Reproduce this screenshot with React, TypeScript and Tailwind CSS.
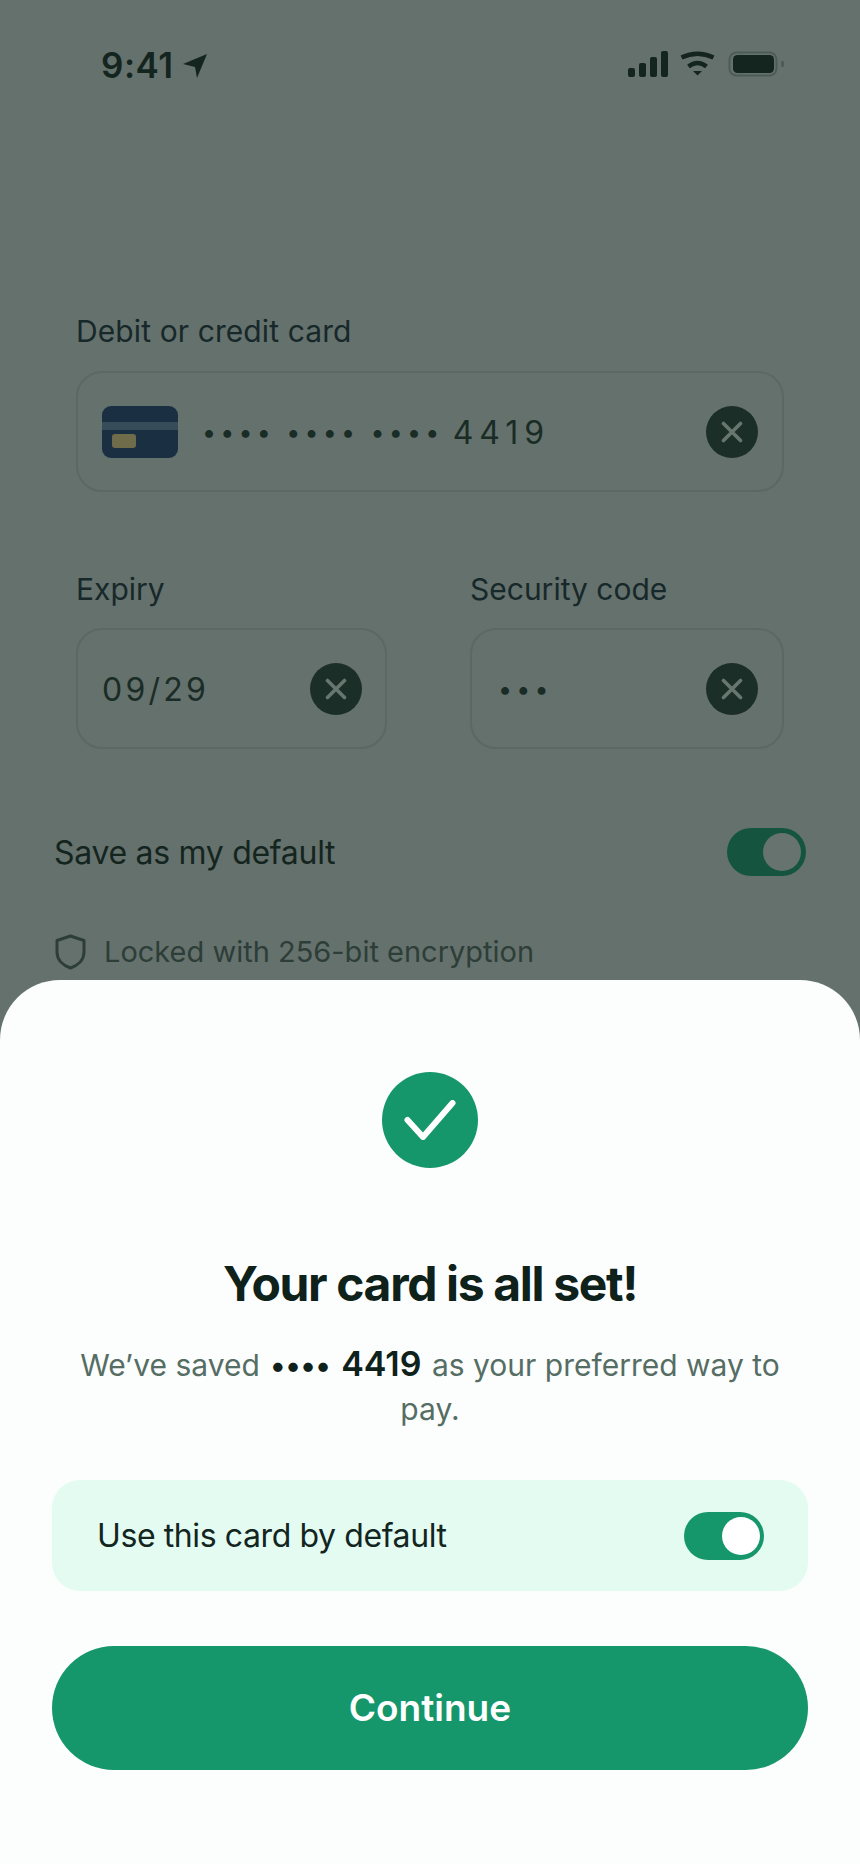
import React from "react";

function ClearButton() {
  return (
    <div className="flex h-[52px] w-[52px] shrink-0 items-center justify-center rounded-full bg-[#1b2e28]">
      <svg width="22" height="22" viewBox="0 0 22 22" fill="none">
        <path d="M2.5 2.5 L19.5 19.5 M19.5 2.5 L2.5 19.5" stroke="#67766f" strokeWidth="3.6" strokeLinecap="round" />
      </svg>
    </div>
  );
}

function Field({ children }: { children: React.ReactNode }) {
  return (
    <div className="flex h-[121px] items-center rounded-[26px] border-2 border-[#5a6962] pl-6 pr-6">
      {children}
    </div>
  );
}

function Dots({ children }: { children: React.ReactNode }) {
  return <span className="text-[25px] tracking-[4.2px]">{children}</span>;
}

function StatusBar() {
  return (
    <div className="flex h-[66px] items-center justify-between pl-[101px] pr-[75px]">
      <div className="flex items-center gap-[8px]">
        <span className="text-[35px] font-semibold leading-none tracking-[0.5px] text-[#14251f]">9:41</span>
        <svg width="26" height="26" viewBox="0 0 26 26" className="mt-[1px]">
          <path d="M1 11 L25 1 L15 25 L13 14 Z" fill="#14251f" />
        </svg>
      </div>
      <svg width="157" height="28" viewBox="0 0 157 28" className="-mt-[1px]">
        <g fill="#14251f">
          <rect x="0" y="17" width="7" height="9" rx="2" />
          <rect x="11" y="12" width="7" height="14" rx="2" />
          <rect x="22" y="6" width="7" height="20" rx="2" />
          <rect x="33" y="0" width="7" height="26" rx="2" />
          <path d="M65 20 L74 20 L69.5 24.5 Z" />
        </g>
        <g fill="none" stroke="#14251f" strokeWidth="4.5">
          <path d="M53.5 6.5 Q69.5 -1 85.5 6.5" />
          <path d="M60.5 15.5 Q69.5 8.5 78.5 15.5" />
        </g>
        <rect x="101.5" y="1.5" width="47" height="23" rx="7" fill="none" stroke="#4d5c56" strokeWidth="2" />
        <rect x="105" y="4" width="41" height="18" rx="4.5" fill="#14251f" />
        <rect x="153" y="10" width="3" height="6" rx="1" fill="#4d5c56" />
      </svg>
    </div>
  );
}

function CardIcon() {
  return (
    <div className="h-[52px] w-[76px] shrink-0 overflow-hidden rounded-[9px] bg-[#1a2f41]">
      <div className="mt-4 h-2 bg-[#374c59]" />
      <div className="ml-[10px] mt-1 h-[14px] w-6 rounded-[3px] bg-[#6f6c4c]" />
    </div>
  );
}

export default function App() {
  return (
    <div
      className="flex h-[1864px] w-[860px] flex-col overflow-hidden bg-[#65716c] text-[#18291f]"
      style={{ fontFamily: '"Inter", "Liberation Sans", sans-serif' }}
    >
      <div className="pt-[32px]">
        <StatusBar />
      </div>

      <div className="px-[76px] pt-[213px]">
        <div className="text-[30px] leading-[40px] tracking-[0.1px] text-[#17282a]">Debit or credit card</div>
        <div className="mt-[20px]">
          <Field>
            <CardIcon />
            <div className="ml-[24px] mt-[2px] flex flex-1 items-center gap-[9px] text-[32px] leading-none tracking-[6px] text-[#1a2c26]">
              <Dots>•••• •••• ••••</Dots>
              <span>4419</span>
            </div>
            <ClearButton />
          </Field>
        </div>

        <div className="mt-[77px] grid grid-cols-[311px_314px] gap-x-[83px]">
          <div>
            <div className="text-[30px] leading-[40px] text-[#17282a]">Expiry</div>
            <div className="mt-[19px]">
              <Field>
                <div className="mt-[2px] flex-1 text-[32px] leading-none tracking-[0.1em] text-[#1a2c26]">09/29</div>
                <div className="-mr-px">
                  <ClearButton />
                </div>
              </Field>
            </div>
          </div>
          <div>
            <div className="text-[30px] leading-[40px] text-[#17282a]">Security code</div>
            <div className="mt-[19px]">
              <Field>
                <div className="ml-[2px] mt-[2px] flex-1 leading-none text-[#1a2c26]">
                  <Dots>•••</Dots>
                </div>
                <ClearButton />
              </Field>
            </div>
          </div>
        </div>
      </div>

      <div className="flex items-center justify-between pl-[54px] pr-[54px] pt-[80px]">
        <div className="text-[32px] leading-[40px] tracking-[-0.3px] text-[#14251f]">Save as my default</div>
        <div className="-mt-px flex h-[48px] w-[79px] items-center justify-end rounded-full bg-[#15543f] pr-[5px]">
          <div className="h-[38px] w-[38px] rounded-full bg-[#67736e]" />
        </div>
      </div>

      <div className="flex items-center gap-[18px] pl-[55px] pt-[58px]">
        <svg width="31" height="36" viewBox="0 0 31 36" fill="none">
          <path
            d="M15.5 2 L29 6.5 V18 C29 26 23 31.5 15.5 34 C8 31.5 2 26 2 18 V6.5 Z"
            stroke="#2d3e38"
            strokeWidth="3"
            strokeLinejoin="round"
          />
        </svg>
        <div className="text-[29px] leading-[36px] text-[#2d3e38]">Locked with 256-bit encryption</div>
      </div>

      <div className="mt-auto flex h-[884px] flex-col items-center rounded-t-[60px] bg-[#fbfefd] px-[52px] pt-[92px]">
        <div className="flex h-[96px] w-[96px] items-center justify-center rounded-full bg-[#15976b]">
          <svg width="52" height="40" viewBox="0 0 52 40" fill="none">
            <path d="M3.5 20 L19 37 L48.5 3" stroke="#ffffff" strokeWidth="6" strokeLinecap="round" strokeLinejoin="round" />
          </svg>
        </div>
        <h1 className="mt-[88px] text-[48px] font-bold leading-[56px] tracking-[-0.028em] text-[#0e211b]">
          Your card is all set!
        </h1>
        <p className="mt-[31px] w-[720px] text-center text-[30px] leading-[44px] text-[#566d64]">
          We’ve saved <span className="ml-[2px] font-semibold text-[#0e211b]">••••</span>{" "}
          <span className="mx-[2px] text-[34px] font-semibold leading-[34px] text-[#0e211b]">4419</span> as your
          preferred way to pay.
        </p>
        <div className="mt-[49px] flex h-[111px] w-full items-center justify-between rounded-[28px] bg-[#e4fbf2] pl-[45px] pr-[44px]">
          <div className="text-[32px] leading-[40px] tracking-[-0.4px] text-[#12251f]">Use this card by default</div>
          <div className="flex h-[48px] w-[80px] items-center justify-end rounded-full bg-[#15976b] pr-[4px]">
            <div className="h-[38px] w-[38px] rounded-full bg-white" />
          </div>
        </div>
        <button className="mt-[55px] h-[124px] w-full rounded-full bg-[#15976b] text-[37px] font-semibold text-white">
          Continue
        </button>
      </div>
    </div>
  );
}
